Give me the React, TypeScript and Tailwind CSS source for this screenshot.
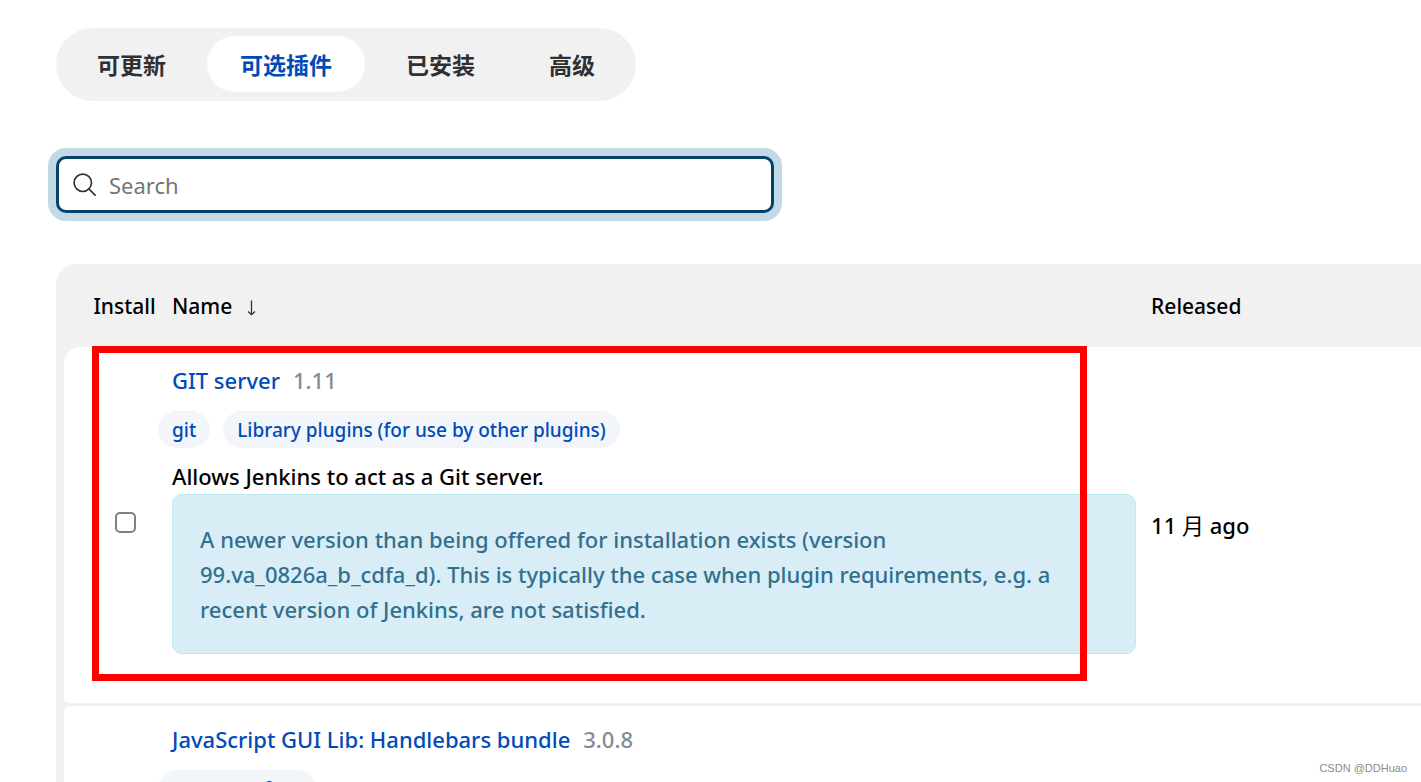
import React from 'react';

const tabs = [
    { id: 1, label: '可更新', active: false },
    { id: 2, label: '可选插件', active: true },
    { id: 3, label: '已安装', active: false },
    { id: 4, label: '高级', active: false },
];

const plugins = [
    {
        id: 'git-server',
        name: 'GIT server',
        version: '1.11',
        tags: ['git', 'Library plugins (for use by other plugins)'],
        description: 'Allows Jenkins to act as a Git server.',
        warning:
            'A newer version than being offered for installation exists (version 99.va_0826a_b_cdfa_d). This is typically the case when plugin requirements, e.g. a recent version of Jenkins, are not satisfied.',
        released: { count: 11, unit: '月' },
    },
    {
        id: 'handlebars',
        name: 'JavaScript GUI Lib: Handlebars bundle',
        version: '3.0.8',
        tags: ['User Interface'],
        description: '',
        warning: '',
        released: null,
    },
];

const TabBar = () => {
    return (
        <nav className="flex w-fit gap-2 rounded-full bg-[#f1f1f1] px-2 pt-2 pb-[9px]">
            {tabs.map((tab) => (
                <a
                    key={tab.id}
                    href="#"
                    className={
                        tab.active
                            ? 'flex h-14 items-center rounded-full bg-white px-[33px] pt-0.5 text-[23px] font-bold text-[#004bb8]'
                            : 'flex h-14 items-center rounded-full px-[33px] pt-0.5 text-[23px] font-bold text-[#303030]'
                    }
                >
                    {tab.label}
                </a>
            ))}
        </nav>
    );
};

const SearchBar = () => {
    return (
        <label className="mt-[55px] flex h-[57px] max-w-[718px] items-center gap-3 rounded-[10px] border-3 border-[#044368] bg-white px-[14px] ring-8 ring-[#c2d9e7]">
            <svg
                className="size-6 shrink-0"
                viewBox="0 0 24 24"
                fill="none"
                stroke="#303030"
                strokeWidth="1.7"
                aria-hidden="true"
            >
                <circle cx="9.8" cy="9.8" r="8.7" />
                <path d="M16 16 L22.6 22.6" />
            </svg>
            <input
                type="search"
                aria-label="Search"
                placeholder="Search"
                className="min-w-0 flex-1 bg-transparent pt-0.5 text-[22px] font-normal outline-none placeholder:text-[#757575]"
            />
        </label>
    );
};

const SortArrow = () => {
    return (
        <svg
            className="ml-[14px] inline-block h-4 w-3"
            viewBox="0 0 12 16"
            fill="none"
            stroke="#303030"
            strokeWidth="1.3"
            aria-hidden="true"
        >
            <path d="M5.5 0.5 V14.5 M2 11.5 L5.5 14.7 L9 11.5" />
        </svg>
    );
};

const PluginTable = () => {
    return (
        <div className="relative mt-[51px] rounded-tl-[20px] bg-[#f1f1f1] pl-2">
            <table className="w-full table-fixed border-separate border-spacing-0 text-left text-[22px] leading-[35px]">
                <thead>
                    <tr className="h-[83px] text-[21px]">
                        <th className="w-[93px] pt-0.5 text-center font-medium">
                            <span className="pl-7">Install</span>
                        </th>
                        <th className="w-[72.15%] pt-0.5 pl-[15px] font-medium">
                            Name
                            <SortArrow />
                        </th>
                        <th className="pt-0.5 pl-[15px] font-medium">
                            Released
                        </th>
                    </tr>
                </thead>
                <tbody>
                    {plugins.map((plugin) => (
                        <tr key={plugin.id} className="group">
                            <td className="rounded-l-md border-b-3 border-[#f1f1f1] bg-white pb-0.5 pl-[29px] text-center align-middle group-first:rounded-tl-2xl">
                                <input
                                    type="checkbox"
                                    aria-label={plugin.name}
                                    className="size-[21px] appearance-none rounded-[5px] border-2 border-[#808080] bg-white"
                                />
                            </td>
                            <td className="border-b-3 border-[#f1f1f1] bg-white pt-4 pb-[49px] pl-[15px] align-top">
                                <div className="flex gap-[13px]">
                                    <a href="#" className="text-[#004bb8]">
                                        {plugin.name}
                                    </a>
                                    <span className="text-[#858b94]">
                                        {plugin.version}
                                    </span>
                                </div>
                                <div className="mt-[13px] -ml-[14px] flex gap-[13px]">
                                    {plugin.tags.map((tag) => (
                                        <a
                                            key={tag}
                                            href="#"
                                            className="flex h-[37px] items-center rounded-full bg-[#f2f6fb] px-[14px] pt-0.5 text-[19px] text-[#004bb8]"
                                        >
                                            {tag}
                                        </a>
                                    ))}
                                </div>
                                <p className="mt-[11px] min-h-[35px]">
                                    {plugin.description}
                                </p>
                                {plugin.warning && (
                                    <div className="rounded-[10px] border border-[#bce8f1] bg-[#d9edf6] pt-[27px] pr-[54px] pb-[26px] pl-[27px] text-[#31708f]">
                                        {plugin.warning}
                                    </div>
                                )}
                            </td>
                            <td className="border-b-3 border-[#f1f1f1] bg-white pl-[15px] align-middle">
                                {plugin.released && (
                                    <>
                                        {plugin.released.count}{' '}
                                        <span className="font-normal">
                                            {plugin.released.unit}
                                        </span>{' '}
                                        ago
                                    </>
                                )}
                            </td>
                        </tr>
                    ))}
                </tbody>
            </table>
            {/* highlight drawn over the first plugin */}
            <div className="pointer-events-none absolute top-[82px] left-9 h-[335px] w-[72.9%] border-7 border-[#ff0000]" />
        </div>
    );
};

const App = () => {
    return (
        <div className="relative h-screen overflow-hidden bg-white pt-7 pl-14 font-['Noto_Sans','Noto_Sans_CJK_SC',sans-serif] font-medium text-black">
            <TabBar />
            <SearchBar />
            <PluginTable />
            <p className="absolute right-[14px] bottom-[6px] font-['Liberation_Sans',sans-serif] text-[11px] font-normal text-[#8c8c8c]">
                CSDN @DDHuao
            </p>
        </div>
    );
};

export default App;
